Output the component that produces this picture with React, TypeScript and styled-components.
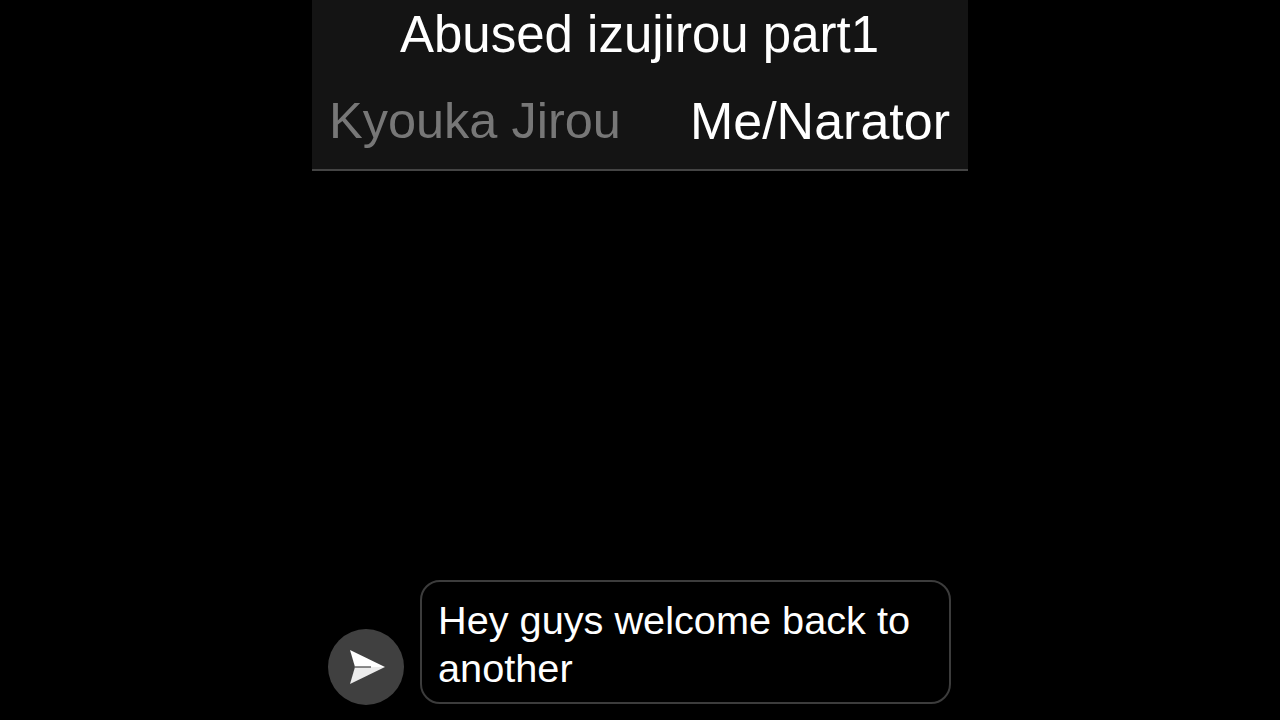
import React from 'react'
import styled, { createGlobalStyle } from 'styled-components'

const GlobalStyle = createGlobalStyle`
  html, body {
    margin: 0;
    padding: 0;
    background: #000;
  }
  body {
    font-family: 'Liberation Sans', Arial, sans-serif;
    color: #fff;
  }
`

const Screen = styled.div`
  width: 1280px;
  height: 720px;
  display: flex;
  flex-direction: column;
  align-items: center;
  background: #000;
  overflow: hidden;
`

const Header = styled.header`
  width: 656px;
  box-sizing: border-box;
  padding: 5px 18px 18px 17px;
  background: #141414;
  border-bottom: 2px solid #444;
  display: flex;
  flex-direction: column;
  gap: 26px;
`

const Title = styled.h1`
  margin: 0;
  font-size: 51px;
  line-height: 60px;
  font-weight: 400;
  text-align: center;
  color: #fff;
`

const Characters = styled.div`
  display: flex;
  justify-content: space-between;
`

interface NameProps {
  active?: boolean
}

const Name = styled.span<NameProps>`
  font-size: ${({ active }) => (active ? '52px' : '50.5px')};
  line-height: 60px;
  color: ${({ active }) => (active ? '#fff' : '#777')};
`

const Messages = styled.div`
  flex: 1;
`

const Composer = styled.div`
  width: 656px;
  box-sizing: border-box;
  padding: 0 17px 16px 16px;
  display: flex;
  align-items: flex-end;
  gap: 16px;
`

const SendButton = styled.button`
  width: 76px;
  height: 76px;
  flex-shrink: 0;
  border: none;
  border-radius: 50%;
  background: #404040;
  display: flex;
  align-items: center;
  justify-content: center;
  padding: 0 0 0 4px;
  margin-bottom: -1px;
`

const Bubble = styled.div`
  width: 531px;
  box-sizing: border-box;
  padding: 14px 17px 10px 16px;
  border: 2px solid #3c3c3c;
  border-radius: 20px;
  font-size: 39.7px;
  line-height: 48px;
  color: #fff;
`

function SendIcon() {
  return (
    <svg width="38" height="38" viewBox="0 0 38 38">
      <polygon points="1,2 36,19 6,19" fill="#fff" />
      <polygon points="1,36 36,19 6,19" fill="#ececec" />
      <line x1="6" y1="19" x2="22" y2="19" stroke="#404040" strokeWidth="1.2" />
    </svg>
  )
}

export default function App() {
  return (
    <>
      <GlobalStyle />
      <Screen>
        <Header>
          <Title>Abused izujirou part1</Title>
          <Characters>
            <Name>Kyouka Jirou</Name>
            <Name active>Me/Narator</Name>
          </Characters>
        </Header>
        <Messages />
        <Composer>
          <SendButton>
            <SendIcon />
          </SendButton>
          <Bubble>Hey guys welcome back to another</Bubble>
        </Composer>
      </Screen>
    </>
  )
}
